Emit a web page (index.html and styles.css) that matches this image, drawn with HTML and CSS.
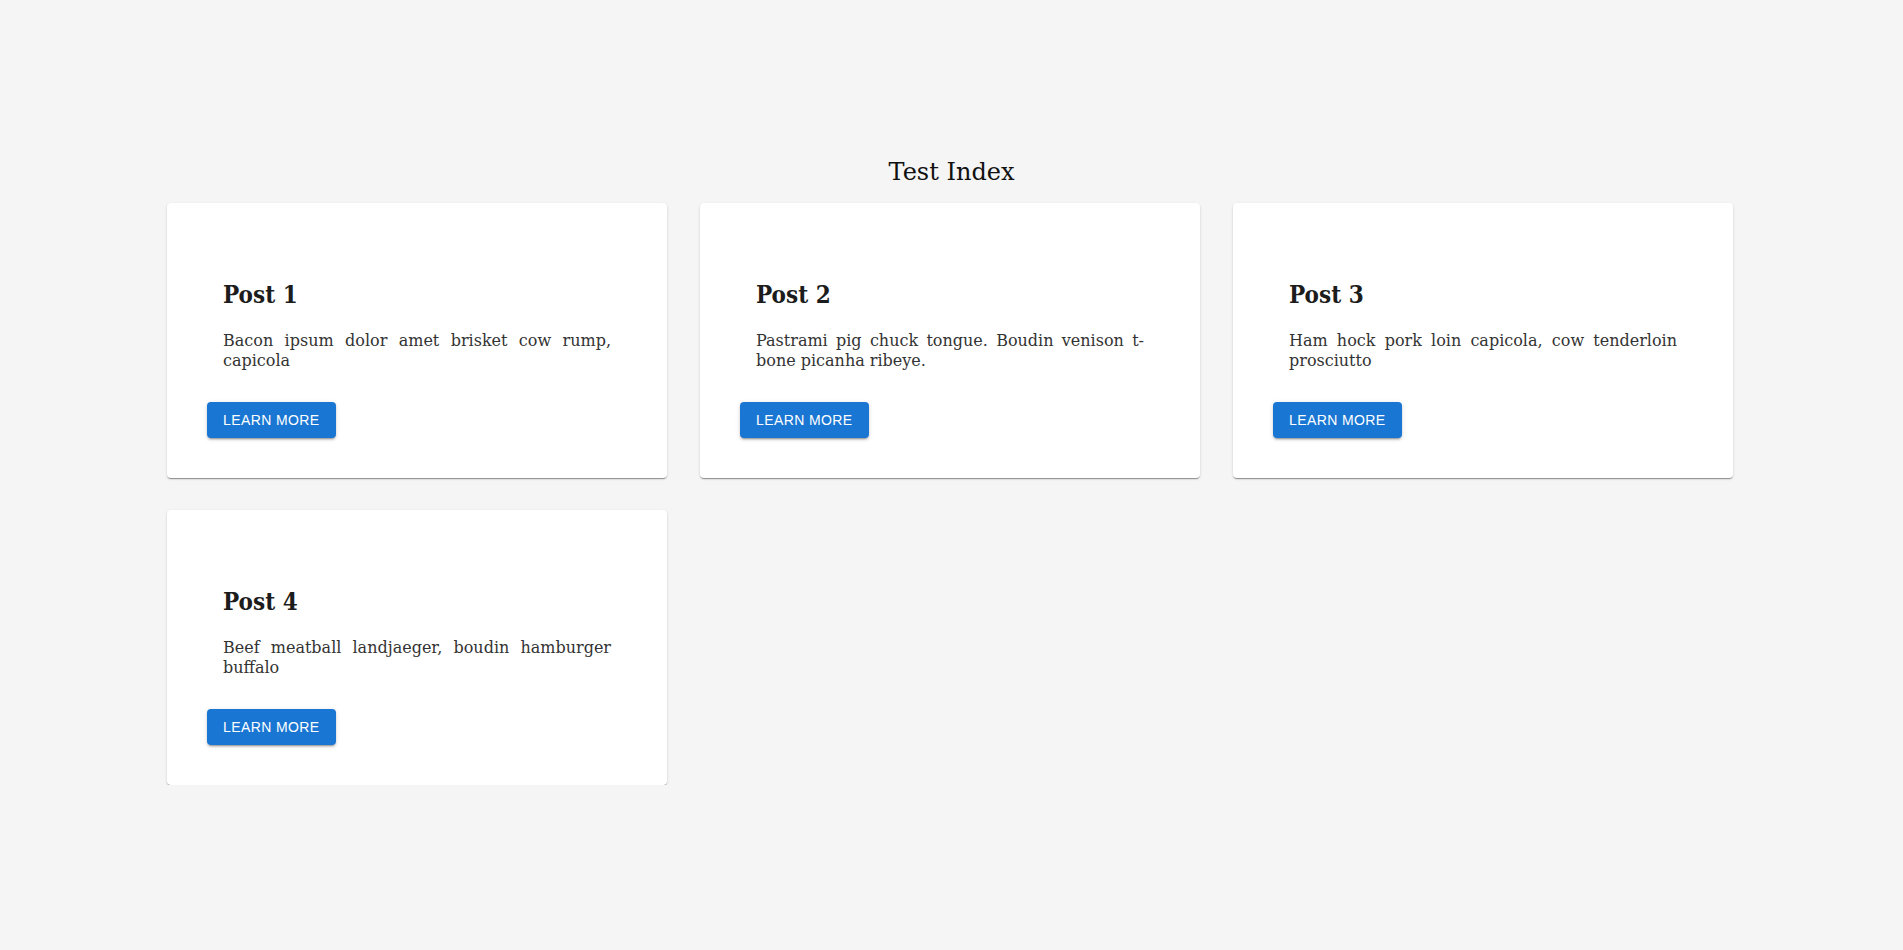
FILE: index.html
```html
<!DOCTYPE html>
<html lang="en">
<head>
<meta charset="utf-8">
<title>Test Index</title>
<link rel="stylesheet" href="styles.css">
</head>
<body>
<main class="page">
  <h1 class="page-title">Test Index</h1>
  <div class="grid">
    <article class="card">
      <div class="card-content">
        <h2 class="card-title">Post 1</h2>
        <p class="card-text">Bacon ipsum dolor amet brisket cow rump, capicola</p>
      </div>
      <div class="card-actions"><button class="btn">Learn More</button></div>
    </article>
    <article class="card">
      <div class="card-content">
        <h2 class="card-title">Post 2</h2>
        <p class="card-text">Pastrami pig chuck tongue. Boudin venison t-bone picanha ribeye.</p>
      </div>
      <div class="card-actions"><button class="btn">Learn More</button></div>
    </article>
    <article class="card">
      <div class="card-content">
        <h2 class="card-title">Post 3</h2>
        <p class="card-text">Ham hock pork loin capicola, cow tenderloin prosciutto</p>
      </div>
      <div class="card-actions"><button class="btn">Learn More</button></div>
    </article>
    <article class="card">
      <div class="card-content">
        <h2 class="card-title">Post 4</h2>
        <p class="card-text">Beef meatball landjaeger, boudin hamburger buffalo</p>
      </div>
      <div class="card-actions"><button class="btn">Learn More</button></div>
    </article>
  </div>
</main>
</body>
</html>
```

FILE: styles.css
```css
html, body {
  margin: 0;
  padding: 0;
  background: #f5f5f5;
}

body {
  font-family: "DejaVu Serif", "Liberation Serif", serif;
  color: rgba(0, 0, 0, 0.87);
}

.page {
  padding-top: 156px;
}

.page-title {
  margin: 0 0 15px 0;
  text-align: center;
  font-size: 24px;
  line-height: 32px;
  font-weight: 400;
  color: #111;
}

.grid {
  display: grid;
  grid-template-columns: repeat(3, 500px);
  column-gap: 33px;
  row-gap: 32px;
  justify-content: start;
  padding-left: 167px;
}

.card {
  background: #fff;
  border-radius: 4px;
  box-shadow: 0 2px 1px -1px rgba(0, 0, 0, 0.25), 0 1px 1px 0 rgba(0, 0, 0, 0.16), 0 1px 3px 0 rgba(0, 0, 0, 0.12);
  height: 275px;
  box-sizing: border-box;
  display: flex;
  flex-direction: column;
}

.card-content {
  padding: 76px 56px 0 56px;
}

.card-title {
  margin: 0 0 20px 0;
  font-family: "DejaVu Serif Condensed", "DejaVu Serif", serif;
  font-size: 24px;
  line-height: 32px;
  font-weight: 700;
  color: #1c1c1c;
}

.card-text {
  margin: 0;
  font-size: 16px;
  line-height: 20px;
  text-align: justify;
  color: #333;
}

.card-actions {
  padding: 31px 40px 40px 40px;
}

.btn {
  font-family: "Liberation Sans", Arial, sans-serif;
  font-size: 14px;
  font-weight: 400;
  letter-spacing: 0.4px;
  text-transform: uppercase;
  color: #fff;
  background: #1976d2;
  border: 0;
  border-radius: 4px;
  height: 36px;
  padding: 0 16px;
  min-width: 64px;
  box-shadow: 0 3px 1px -2px rgba(0, 0, 0, 0.2), 0 2px 2px 0 rgba(0, 0, 0, 0.14), 0 1px 5px 0 rgba(0, 0, 0, 0.12);
  cursor: pointer;
}
```
